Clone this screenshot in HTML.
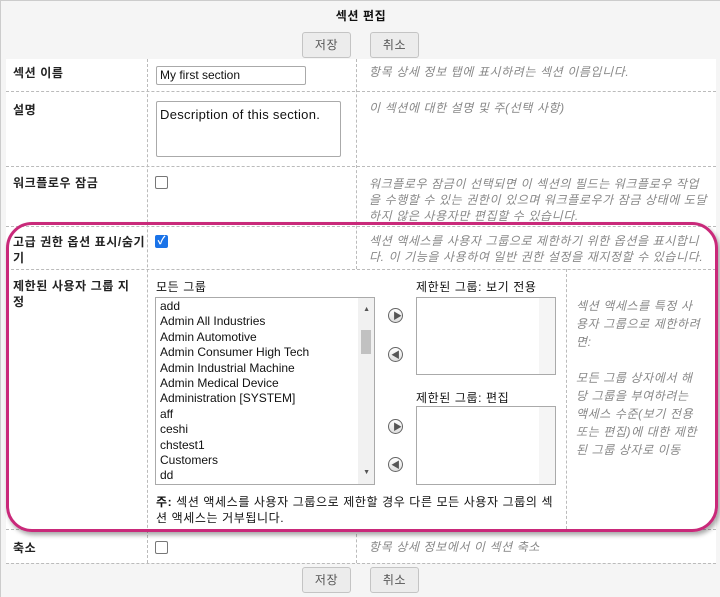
<!DOCTYPE html>
<html><head><meta charset="utf-8"><style>
*{box-sizing:border-box;margin:0;padding:0}
body{width:720px;height:597px;background:#f5f5f5;font-family:"Liberation Sans","Noto Sans CJK KR",sans-serif;font-size:12px;color:#111;position:relative;overflow:hidden;border-left:1px solid #ccc;border-top:1px solid #ccc}
.a{position:absolute;white-space:nowrap}
.k{letter-spacing:.6px}
.btn{position:absolute;width:49px;height:26px;border:1px solid #c4c4c4;border-radius:3px;background:#ececec;color:#555;font-size:12px;text-align:center;line-height:24px;letter-spacing:.6px}
.hd{position:absolute;border-top:1px dashed #bbb;height:0}
.vd{position:absolute;border-left:1px dashed #bbb;width:0}
.lbl{position:absolute;font-weight:bold;color:#222;font-size:12px;line-height:16px;white-space:nowrap;letter-spacing:.6px}
.desc{position:absolute;color:#888;font-style:italic;font-size:12px;line-height:16px;white-space:nowrap;letter-spacing:.6px}
.cb{position:absolute;width:13px;height:13px;border:1px solid #777;border-radius:2px;background:#fff}
.box{position:absolute;border:1px solid #aaa;background:#fff}
.circ{position:absolute;width:15px;height:15px;border:1px solid #666;border-radius:50%;background:linear-gradient(#fff,#ddd)}
</style></head><body>
<div class="a k" style="left:0;width:720px;text-align:center;top:6px;font-weight:bold">섹션 편집</div>
<div class="btn" style="left:301px;top:31px">저장</div>
<div class="btn" style="left:369px;top:31px">취소</div>
<div style="position:absolute;left:5px;top:58px;width:710px;height:504px;background:#fff"></div>
<div class="hd" style="left:5px;width:710px;top:90px"></div>
<div class="hd" style="left:5px;width:710px;top:165px"></div>
<div class="hd" style="left:5px;width:710px;top:225px"></div>
<div class="hd" style="left:5px;width:710px;top:268px"></div>
<div class="hd" style="left:5px;width:710px;top:528px"></div>
<div class="hd" style="left:5px;width:710px;top:562px"></div>
<div class="vd" style="left:146px;top:58px;height:504px"></div>
<div class="vd" style="left:355px;top:58px;height:210px"></div>
<div class="vd" style="left:355px;top:528px;height:34px"></div>
<div class="vd" style="left:565px;top:268px;height:260px"></div>

<div class="lbl" style="left:12px;top:64px">섹션 이름</div>
<div class="box" style="left:155px;top:65px;width:150px;height:19px;border-radius:2px;padding-left:3px;line-height:17px">My first section</div>
<div class="desc" style="left:368px;top:63px">항목 상세 정보 탭에 표시하려는 섹션 이름입니다.</div>

<div class="lbl" style="left:12px;top:101px">설명</div>
<div class="box" style="left:155px;top:100px;width:185px;height:56px;border-radius:2px;padding:5px 3px;font-size:13px;line-height:16px;letter-spacing:.3px">Description of this section.</div>
<div class="desc" style="left:368px;top:99px">이 섹션에 대한 설명 및 주(선택 사항)</div>

<div class="lbl" style="left:12px;top:174px">워크플로우 잠금</div>
<div class="cb" style="left:154px;top:175px"></div>
<div class="desc" style="left:368px;top:175px">워크플로우 잠금이 선택되면 이 섹션의 필드는 워크플로우 작업<br>을 수행할 수 있는 권한이 있으며 워크플로우가 잠금 상태에 도달<br>하지 않은 사용자만 편집할 수 있습니다.</div>

<div class="lbl" style="left:12px;top:233px">고급 권한 옵션 표시/숨기<br>기</div>
<div class="cb" style="left:154px;top:234px;background:#1a73e8;border-color:#1a73e8;color:#fff;font-size:11px;line-height:11px;text-align:center;font-weight:bold">✓</div>
<div class="desc" style="left:368px;top:232px">섹션 액세스를 사용자 그룹으로 제한하기 위한 옵션을 표시합니<br>다. 이 기능을 사용하여 일반 권한 설정을 재지정할 수 있습니다.</div>

<div class="lbl" style="left:12px;top:277px">제한된 사용자 그룹 지<br>정</div>
<div class="a k" style="left:155px;top:277px">모든 그룹</div>
<div class="box" style="left:154px;top:296px;width:220px;height:188px;padding:1px 4px;line-height:15.4px">
add<br>Admin All Industries<br>Admin Automotive<br>Admin Consumer High Tech<br>Admin Industrial Machine<br>Admin Medical Device<br>Administration [SYSTEM]<br>aff<br>ceshi<br>chstest1<br>Customers<br>dd
<div style="position:absolute;right:0;top:0;width:16px;height:186px;background:#f1f1f1"></div>
<div style="position:absolute;right:3px;top:32px;width:10px;height:24px;background:#c1c1c1"></div>
<div style="position:absolute;right:4px;top:4px;font-size:7px;color:#555">▲</div>
<div style="position:absolute;right:4px;bottom:4px;font-size:7px;color:#555">▼</div>
</div>
<div class="circ" style="left:387px;top:307px"></div>
<div class="circ" style="left:387px;top:346px"></div>
<div class="circ" style="left:387px;top:418px"></div>
<div class="circ" style="left:387px;top:456px"></div>
<div class="a" style="left:392px;top:308px;font-size:9px;color:#555">▶</div>
<div class="a" style="left:390px;top:347px;font-size:9px;color:#555">◀</div>
<div class="a" style="left:392px;top:419px;font-size:9px;color:#555">▶</div>
<div class="a" style="left:390px;top:457px;font-size:9px;color:#555">◀</div>
<div class="a k" style="left:415px;top:277px">제한된 그룹: 보기 전용</div>
<div class="box" style="left:415px;top:296px;width:140px;height:78px"><div style="position:absolute;right:0;top:0;width:16px;height:76px;background:#f5f5f5"></div></div>
<div class="a k" style="left:415px;top:388px">제한된 그룹: 편집</div>
<div class="box" style="left:415px;top:405px;width:140px;height:79px"><div style="position:absolute;right:0;top:0;width:16px;height:77px;background:#f5f5f5"></div></div>
<div class="a k" style="left:155px;top:493px;line-height:16px"><b>주:</b> 섹션 액세스를 사용자 그룹으로 제한할 경우 다른 모든 사용자 그룹의 섹<br>션 액세스는 거부됩니다.</div>
<div class="desc" style="left:575px;top:296px;line-height:18px">섹션 액세스를 특정 사<br>용자 그룹으로 제한하려<br>면:<br><br>모든 그룹 상자에서 해<br>당 그룹을 부여하려는<br>액세스 수준(보기 전용<br>또는 편집)에 대한 제한<br>된 그룹 상자로 이동</div>

<div class="lbl" style="left:12px;top:539px">축소</div>
<div class="cb" style="left:154px;top:540px"></div>
<div class="desc" style="left:368px;top:538px">항목 상세 정보에서 이 섹션 축소</div>

<div class="btn" style="left:301px;top:566px">저장</div>
<div class="btn" style="left:369px;top:566px">취소</div>

<div style="position:absolute;left:5px;top:221px;width:712px;height:310px;border:3px solid #c9297a;border-radius:26px;box-shadow:2px 3px 5px rgba(0,0,0,.35)"></div>
</body></html>
